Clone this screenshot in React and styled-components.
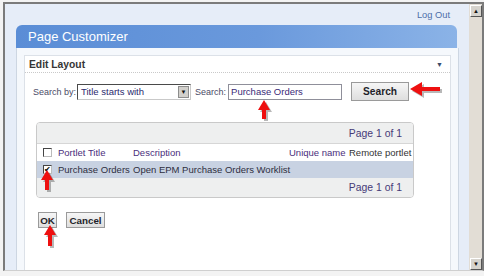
import styled, { createGlobalStyle } from "styled-components";

const Global = createGlobalStyle`
  html, body { margin: 0; padding: 0; background: #f3f3f3; }
  body { font-family: "Liberation Sans", Arial, sans-serif; }
`;

const Screen = styled.div`
  position: relative;
  width: 484px;
  height: 276px;
  box-sizing: border-box;
  padding: 2px 0 0 3px;
  overflow: hidden;
`;

const Frame = styled.div`
  display: flex;
  height: 266px;
  border-top: 2px solid #7b7b7b;
  border-left: 2px solid #7b7b7b;
  border-right: 2px solid #7b7b7b;
  border-bottom: 1px solid #cfcfcf;
`;

const Main = styled.div`
  width: 464px;
  display: flex;
  flex-direction: column;
  padding: 0 10px 0 11px;
  box-sizing: border-box;
  background: #e6edf8;
`;

const TopLinks = styled.div`
  height: 21px;
  display: flex;
  justify-content: flex-end;
  align-items: center;
  padding-right: 9px;
  font-size: 9.3px;
  color: #4d6ea9;
`;

const Portlet = styled.div`
  flex: 1;
  display: flex;
  flex-direction: column;
`;

const PortletHeader = styled.div`
  height: 23px;
  margin-right: 2px;
  display: flex;
  align-items: center;
  padding-left: 12px;
  border-radius: 6px 6px 0 0;
  background: linear-gradient(to right, #5a8dd6, #6a99dc 55%, #8bb3e7);
  color: #fff;
  font-size: 13px;
`;

const PortletBody = styled.div`
  flex: 1;
  display: flex;
  padding: 7px 7px 0 7px;
  background: #f5f8fc;
  border-left: 1px solid #cdd6e2;
  border-right: 1px solid #cdd6e2;
`;

const Section = styled.div`
  flex: 1;
  background: #fff;
  border: 1px solid #dce1e8;
  border-bottom: none;
`;

const SectionHeader = styled.div`
  height: 16px;
  display: flex;
  align-items: center;
  justify-content: space-between;
  padding: 0 7px 0 4px;
  border-bottom: 1px dotted #c9c9c9;
  font-size: 10.3px;
  font-weight: bold;
  color: #363636;
`;

const Caret = styled.span`
  font-size: 7px;
  color: #3a4a6a;
`;

const SectionBody = styled.div`
  padding: 9px 0 0 8px;
`;

const SearchRow = styled.div`
  display: flex;
  align-items: center;
  height: 19px;
`;

const Label = styled.span`
  font-size: 9px;
  color: #4b4b66;
  margin: ${(p) => p.$m || "0"};
`;

const Select = styled.div`
  width: 114px;
  height: 16px;
  box-sizing: border-box;
  display: flex;
  align-items: center;
  justify-content: space-between;
  padding-left: 3px;
  background: #fff;
  border-top: 1px solid #4a4a4a;
  border-left: 1px solid #4a4a4a;
  border-right: 1px solid #c9c9c9;
  border-bottom: 1px solid #c9c9c9;
  font-size: 9.5px;
  color: #2b2a6e;
`;

const DropBtn = styled.span`
  width: 11px;
  height: 12px;
  margin-right: 1px;
  display: flex;
  align-items: center;
  justify-content: center;
  background: #d2d0cc;
  border: 1px solid #8d8d8d;
  box-sizing: border-box;
  font-size: 6px;
  color: #111;
`;

const Input = styled.div`
  width: 114px;
  height: 16px;
  box-sizing: border-box;
  display: flex;
  align-items: center;
  padding-left: 2px;
  margin-left: 2px;
  background: #fff;
  border: 1px solid #8f8f9a;
  font-size: 9.5px;
  color: #3a2a78;
`;

const Button = styled.div`
  width: ${(p) => p.$w}px;
  height: ${(p) => p.$h}px;
  box-sizing: border-box;
  display: flex;
  align-items: center;
  justify-content: center;
  margin-left: ${(p) => p.$ml || 0}px;
  border: 1px solid #9a9a9a;
  background: linear-gradient(#f6f6f6, #dedede);
  font-size: ${(p) => p.$fs || 9.8}px;
  font-weight: bold;
  color: #1f1f2a;
`;

const Table = styled.div`
  width: 378px;
  margin: 21px 0 0 3px;
  border: 1px solid #c9c9c9;
  border-radius: 4px;
  overflow: hidden;
  box-sizing: border-box;
`;

const Band = styled.div`
  height: ${(p) => p.$h}px;
  display: flex;
  align-items: center;
  justify-content: flex-end;
  padding-right: 11px;
  background: #eeefef;
  font-size: 10.4px;
  color: #463a78;
`;

const Row = styled.div`
  height: 17px;
  display: grid;
  grid-template-columns: 21px 75px 156px 60px 1fr;
  align-items: center;
  font-size: 9.5px;
  color: ${(p) => (p.$head ? "#4a2e7c" : "#2e2e3e")};
  background: ${(p) => (p.$head ? "#fff" : "#c8d2e2")};
  border-top: ${(p) => (p.$head ? "1px solid #d6d6d6" : "none")};
  white-space: nowrap;
`;

const Cell = styled.span`
  color: ${(p) => p.$c || "inherit"};
`;

const Check = styled.span`
  width: 9px;
  height: 9px;
  margin-left: 6px;
  box-sizing: border-box;
  display: flex;
  align-items: center;
  justify-content: center;
  background: #fff;
  border-top: 1px solid #444;
  border-left: 1px solid #444;
  border-right: 1px solid #bbb;
  border-bottom: 1px solid #bbb;
  font-size: 8px;
  line-height: 1;
  color: #000;
`;

const Actions = styled.div`
  display: flex;
  margin: 14px 0 0 5px;
`;

const ScrollBar = styled.div`
  width: 13px;
  display: flex;
  flex-direction: column;
  justify-content: space-between;
  background: #e2ddd5;
  padding: 1px 0 0 0;
`;

const ScrollBtn = styled.div`
  width: 12px;
  height: 12px;
  margin-left: 1px;
  box-sizing: border-box;
  display: flex;
  align-items: center;
  justify-content: center;
  background: #d6d3cd;
  border-top: 1px solid #fff;
  border-left: 1px solid #fff;
  border-right: 1px solid #555;
  border-bottom: 1px solid #555;
  font-size: 6px;
  color: #111;
`;

const Arrow = styled.svg`
  position: absolute;
  left: ${(p) => p.$x}px;
  top: ${(p) => p.$y}px;
  overflow: visible;
`;

function UpArrow({ x, y, h }) {
  const pts = `6,0 12,10 8,10 8,${h} 4,${h} 4,10 0,10`;
  return (
    <Arrow $x={x} $y={y} width="12" height={h}>
      <polygon points={pts} transform="translate(2,2)" fill="rgba(0,0,0,0.28)" />
      <polygon points={pts} fill="#ee1010" />
    </Arrow>
  );
}

function LeftArrow({ x, y }) {
  const pts = "0,7 12,0 12,5 30,5 30,9 12,9 12,14";
  return (
    <Arrow $x={x} $y={y} width="30" height="14">
      <polygon points={pts} transform="translate(2,2)" fill="rgba(0,0,0,0.28)" />
      <polygon points={pts} fill="#ee1010" />
    </Arrow>
  );
}

export default function App() {
  return (
    <Screen>
      <Global />
      <Frame>
        <Main>
          <TopLinks>Log Out</TopLinks>
          <Portlet>
            <PortletHeader>Page Customizer</PortletHeader>
            <PortletBody>
              <Section>
                <SectionHeader>
                  Edit Layout
                  <Caret>▼</Caret>
                </SectionHeader>
                <SectionBody>
                  <SearchRow>
                    <Label $m="0 1px 0 0">Search by:</Label>
                    <Select>
                      Title starts with
                      <DropBtn>▼</DropBtn>
                    </Select>
                    <Label $m="0 0 0 4px">Search:</Label>
                    <Input>Purchase Orders</Input>
                    <Button $w={58} $h={19} $ml={9} $fs={10.2}>Search</Button>
                  </SearchRow>
                  <Table>
                    <Band $h={20}>Page 1 of 1</Band>
                    <Row $head>
                      <Check />
                      <Cell>Portlet Title</Cell>
                      <Cell>Description</Cell>
                      <Cell>Unique name</Cell>
                      <Cell $c="#333">Remote portlet</Cell>
                    </Row>
                    <Row>
                      <Check>✔</Check>
                      <Cell>Purchase Orders</Cell>
                      <Cell>Open EPM Purchase Orders Worklist</Cell>
                      <Cell />
                      <Cell />
                    </Row>
                    <Band $h={19}>Page 1 of 1</Band>
                  </Table>
                  <Actions>
                    <Button $w={19} $h={16}>OK</Button>
                    <Button $w={39} $h={16} $ml={9}>Cancel</Button>
                  </Actions>
                </SectionBody>
              </Section>
            </PortletBody>
          </Portlet>
        </Main>
        <ScrollBar>
          <ScrollBtn>▲</ScrollBtn>
          <ScrollBtn>▼</ScrollBtn>
        </ScrollBar>
      </Frame>
      <LeftArrow x={410} y={82} />
      <UpArrow x={258} y={100} h={19} />
      <UpArrow x={41} y={170} h={20} />
      <UpArrow x={44} y={225} h={21} />
    </Screen>
  );
}
